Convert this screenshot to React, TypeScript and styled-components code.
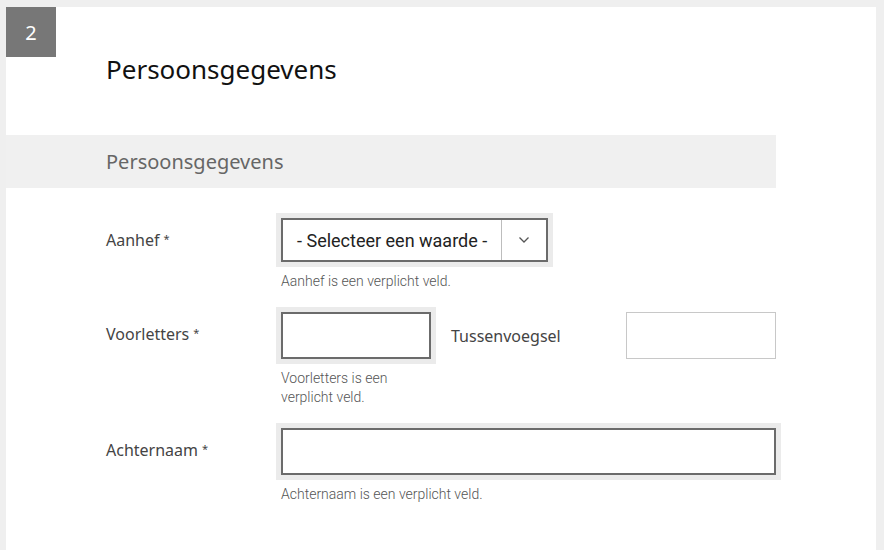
import * as React from 'react';
import styled, { createGlobalStyle } from 'styled-components';

const GlobalStyle = createGlobalStyle`
  html, body {
    margin: 0;
    padding: 0;
    background: #efefef;
  }
  * {
    box-sizing: border-box;
  }
`;

const Page = styled.div`
  height: 550px;
  padding: 7px 8px 0 6px;
  overflow: hidden;
`;

const Card = styled.div`
  background: #fff;
  height: 100%;
`;

const Badge = styled.div`
  width: 50px;
  height: 50px;
  background: #777;
  color: #fff;
  display: flex;
  align-items: center;
  justify-content: center;
  font-family: 'Noto Sans', sans-serif;
  font-size: 20px;
`;

const Title = styled.h1`
  margin: 0;
  padding: 0 0 0 100px;
  height: 78px;
  font-family: 'Noto Sans', sans-serif;
  font-weight: 400;
  font-size: 26px;
  line-height: 24px;
  color: #111;
`;

const SectionBand = styled.div`
  width: 770px;
  height: 53px;
  background: #f0f0f0;
  display: flex;
  align-items: center;
  padding-left: 100px;
  font-family: 'Noto Sans', sans-serif;
  font-size: 20px;
  color: #666;
`;

const Form = styled.div`
  padding: 25px 0 0 100px;
  display: flex;
  flex-direction: column;
  gap: 16px;
`;

const Row = styled.div`
  display: grid;
  grid-template-columns: 170px auto;
`;

const Label = styled.div`
  height: 54px;
  display: flex;
  align-items: center;
  font-family: 'Noto Sans', sans-serif;
  font-size: 16px;
  color: #444;
`;

const SideLabel = styled(Label)`
  width: 185px;
  padding-left: 15px;
  height: 57px;
`;

const Star = styled.sup`
  font-size: 11px;
  margin-left: 4px;
  position: relative;
  top: -2px;
`;

const FieldLine = styled.div`
  display: flex;
  align-items: flex-start;
`;

const FieldColumn = styled.div`
  display: flex;
  flex-direction: column;
  align-items: flex-start;
`;

const Frame = styled.div<{ $plain?: boolean }>`
  padding: 5px;
  background: ${p => (p.$plain ? 'transparent' : '#ebebeb')};
`;

const TextInput = styled.input<{ $width: number; $light?: boolean }>`
  display: block;
  width: ${p => p.$width}px;
  height: 47px;
  margin: 0;
  border: ${p => (p.$light ? '1px solid #c8c8c8' : '2px solid #6b6b6b')};
  background: #fff;
  outline: none;
  font-family: 'Roboto', sans-serif;
  font-size: 16px;
`;

const Select = styled.div`
  width: 267px;
  height: 44px;
  border: 2px solid #6b6b6b;
  background: #fff;
  display: flex;
  align-items: stretch;
`;

const SelectValue = styled.div`
  flex: 1;
  display: flex;
  align-items: center;
  padding-left: 14px;
  font-family: 'Roboto', sans-serif;
  font-size: 18px;
  color: #222;
`;

const SelectToggle = styled.div`
  width: 45px;
  border-left: 1px solid #bdbdbd;
  display: flex;
  align-items: center;
  justify-content: center;
`;

const Help = styled.div<{ $width?: number }>`
  margin-top: 5px;
  padding-left: 5px;
  max-width: ${p => (p.$width ? `${p.$width}px` : 'none')};
  font-family: 'Roboto', sans-serif;
  font-size: 14px;
  font-weight: 300;
  line-height: 19px;
  color: #555;
`;

const Chevron = () => (
  <svg width="12" height="8" viewBox="0 0 12 8" fill="none">
    <path d="M1.5 1.5 6 6l4.5-4.5" stroke="#555" strokeWidth="1.3" />
  </svg>
);

export default function App() {
  return (
    <>
      <GlobalStyle />
      <Page>
        <Card>
          <Badge>2</Badge>
          <Title>Persoonsgegevens</Title>
          <SectionBand>Persoonsgegevens</SectionBand>
          <Form>
            <Row>
              <Label>
                Aanhef<Star>*</Star>
              </Label>
              <FieldColumn>
                <Frame>
                  <Select>
                    <SelectValue>- Selecteer een waarde -</SelectValue>
                    <SelectToggle>
                      <Chevron />
                    </SelectToggle>
                  </Select>
                </Frame>
                <Help>Aanhef is een verplicht veld.</Help>
              </FieldColumn>
            </Row>
            <Row>
              <Label>
                Voorletters<Star>*</Star>
              </Label>
              <FieldLine>
                <FieldColumn>
                  <Frame>
                    <TextInput $width={150} />
                  </Frame>
                  <Help $width={160}>Voorletters is een verplicht veld.</Help>
                </FieldColumn>
                <SideLabel>Tussenvoegsel</SideLabel>
                <Frame $plain>
                  <TextInput $width={150} $light />
                </Frame>
              </FieldLine>
            </Row>
            <Row>
              <Label>
                Achternaam<Star>*</Star>
              </Label>
              <FieldColumn>
                <Frame>
                  <TextInput $width={495} />
                </Frame>
                <Help>Achternaam is een verplicht veld.</Help>
              </FieldColumn>
            </Row>
          </Form>
        </Card>
      </Page>
    </>
  );
}
